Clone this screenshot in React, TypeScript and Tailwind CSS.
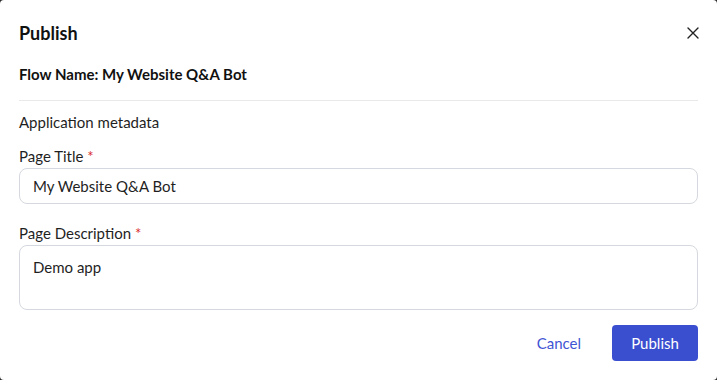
const Label = ({ text }: { text: string }) => (
  <div className="text-[15px] leading-5 text-[#1f1f1f]">
    {text} <span className="text-[#d92b2b]">*</span>
  </div>
);

export default function App() {
  return (
    <div className="w-[717px] h-[380px] bg-[#2a2a2a]" style={{ fontFamily: 'Lato, "Noto Sans", sans-serif' }}>
      <div className="w-full h-full bg-white rounded-[4px] px-[19px] flex flex-col">
        <div className="flex items-center justify-between pt-[21px] h-[45px]">
          <h1 className="text-[18px] font-bold leading-6 text-[#111]">Publish</h1>
          <button className="mr-[-2px] text-[#222]" aria-label="close">
            <svg width="14" height="14" viewBox="0 0 14 14" fill="none" stroke="currentColor" strokeWidth="1.4" strokeLinecap="round">
              <path d="M2 2 L12 12 M12 2 L2 12" />
            </svg>
          </button>
        </div>
        <div className="mt-[19px] text-[15px] font-bold leading-5 text-[#111]">Flow Name: My Website Q&amp;A Bot</div>
        <div className="mt-[16px] border-t border-[#e9e9ec]" />
        <div className="mt-[11px] text-[15px] leading-5 text-[#1f1f1f]">Application metadata</div>
        <div className="mt-[14px]">
          <Label text="Page Title" />
          <div className="mt-[2px] h-[36px] rounded-[8px] border border-[#d5d8de] px-[13px] flex items-center text-[15px] text-[#1f1f1f]">
            My Website Q&amp;A Bot
          </div>
        </div>
        <div className="mt-[19px]">
          <Label text="Page Description" />
          <div className="mt-[2px] h-[65px] rounded-[8px] border border-[#d5d8de] px-[13px] pt-[11px] text-[15px] leading-5 text-[#1f1f1f]">
            Demo app
          </div>
        </div>
        <div className="mt-[15px] flex items-center justify-end gap-[31px]">
          <button className="text-[15px] text-[#3f55d4]">Cancel</button>
          <button className="h-[36px] w-[86px] rounded-[4px] bg-[#3a4fd0] text-[15px] text-white">Publish</button>
        </div>
      </div>
    </div>
  );
}
